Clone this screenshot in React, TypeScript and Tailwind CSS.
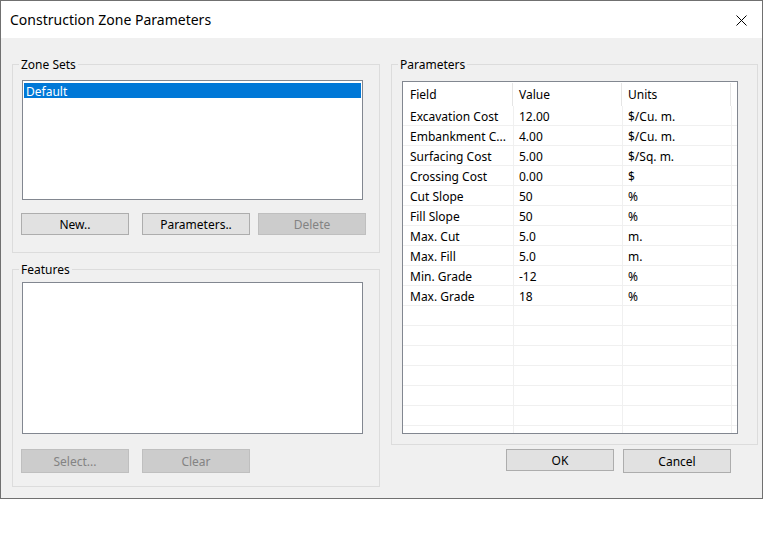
import React from 'react';

const rows: [string, string, string][] = [
  ['Excavation Cost', '12.00', '$/Cu. m.'],
  ['Embankment C...', '4.00', '$/Cu. m.'],
  ['Surfacing Cost', '5.00', '$/Sq. m.'],
  ['Crossing Cost', '0.00', '$'],
  ['Cut Slope', '50', '%'],
  ['Fill Slope', '50', '%'],
  ['Max. Cut', '5.0', 'm.'],
  ['Max. Fill', '5.0', 'm.'],
  ['Min. Grade', '-12', '%'],
  ['Max. Grade', '18', '%'],
];

function Button({ label, disabled, className = '' }: { label: string; disabled?: boolean; className?: string }) {
  return (
    <button
      className={`w-[108px] flex items-center justify-center border pt-[2px] text-[12px] leading-none ${
        disabled
          ? 'bg-[#cccccc] border-[#bfbfbf] text-[#838383]'
          : 'bg-[#e1e1e1] border-[#adadad] text-black'
      } ${className}`}
    >
      {label}
    </button>
  );
}

function GroupBox({ title, className = '', children }: { title: string; className?: string; children: React.ReactNode }) {
  return (
    <div className={`relative border border-[#dcdcdc] ${className}`}>
      <span className="absolute -top-[8px] left-[6px] bg-[#f0f0f0] px-[2px] text-[12px] leading-[16px] text-black">
        {title}
      </span>
      {children}
    </div>
  );
}

export default function App() {
  const emptyRows = Array.from({ length: 7 });

  return (
    <div className="w-[763px] h-[545px] bg-white font-['Noto_Sans',sans-serif] text-black overflow-hidden">
      {/* Dialog */}
      <div className="w-[763px] h-[499px] border border-[#707070] bg-[#f0f0f0] flex flex-col">
        {/* Title bar */}
        <div className="h-[37px] shrink-0 bg-white flex items-center pl-[9px] pr-[15px]">
          <span className="text-[14px] leading-none flex-1 pt-[1px]">Construction Zone Parameters</span>
          <svg width="11" height="11" viewBox="0 0 11 11" className="mt-[1px]">
            <path d="M0.5 0.5 L10.5 10.5 M10.5 0.5 L0.5 10.5" stroke="#000" strokeWidth="1" fill="none" />
          </svg>
        </div>

        {/* Body */}
        <div className="flex pt-[26px] pl-[11px] pr-[4px]">
          {/* Left column */}
          <div className="w-[368px] flex flex-col">
            <GroupBox title="Zone Sets" className="pt-[15px] pb-[17px]">
              <div className="ml-[9px] w-[341px] h-[120px] border border-[#828790] bg-white pt-[2px] pl-[1px]">
                <div className="h-[15px] w-[337px] bg-[#0078d7] text-white text-[12px] leading-[15px] pl-[2px] pt-[1px]">
                  Default
                </div>
              </div>
              <div className="flex mt-[13px] ml-[8px] h-[22px]">
                <Button label="New.." />
                <Button label="Parameters.." className="ml-[13px]" />
                <Button label="Delete" disabled className="ml-[8px]" />
              </div>
            </GroupBox>

            <GroupBox title="Features" className="mt-[16px] pt-[12px] pb-[13px]">
              <div className="ml-[9px] w-[341px] h-[152px] border border-[#828790] bg-white" />
              <div className="flex mt-[15px] ml-[8px] h-[24px]">
                <Button label="Select..." disabled />
                <Button label="Clear" disabled className="ml-[13px]" />
              </div>
            </GroupBox>
          </div>

          {/* Right column */}
          <div className="ml-[11px] w-[367px] flex flex-col">
            <GroupBox title="Parameters" className="pt-[16px] pb-[10px]">
              <div className="ml-[10px] w-[336px] h-[353px] border border-[#828790] bg-white overflow-hidden text-[12px]">
                <div className="flex h-[24px] pt-[1px]">
                  <div className="w-[110px] border-r border-[#e5e5e5] pl-[7px] flex items-center">Field</div>
                  <div className="w-[109px] border-r border-[#e5e5e5] pl-[6px] flex items-center">Value</div>
                  <div className="w-[109px] border-r border-[#e5e5e5] pl-[6px] flex items-center">Units</div>
                </div>
                {rows.map(([f, v, u]) => (
                  <div key={f} className="flex h-[20px] border-b border-[#f0f0f0]">
                    <div className="w-[111px] border-r border-[#f0f0f0] pl-[7px] pt-[2px] flex items-center whitespace-nowrap">{f}</div>
                    <div className="w-[109px] border-r border-[#f0f0f0] pl-[5px] pt-[2px] flex items-center">{v}</div>
                    <div className="w-[109px] border-r border-[#f0f0f0] pl-[5px] pt-[2px] flex items-center">{u}</div>
                  </div>
                ))}
                {emptyRows.map((_, i) => (
                  <div key={i} className="flex h-[20px] border-b border-[#f0f0f0]">
                    <div className="w-[111px] border-r border-[#f0f0f0]" />
                    <div className="w-[109px] border-r border-[#f0f0f0]" />
                    <div className="w-[109px] border-r border-[#f0f0f0]" />
                  </div>
                ))}
              </div>
            </GroupBox>

            <div className="flex mt-[4px] ml-[115px]">
              <Button label="OK" className="h-[22px]" />
              <Button label="Cancel" className="h-[24px] ml-[9px]" />
            </div>
          </div>
        </div>
      </div>
    </div>
  );
}
